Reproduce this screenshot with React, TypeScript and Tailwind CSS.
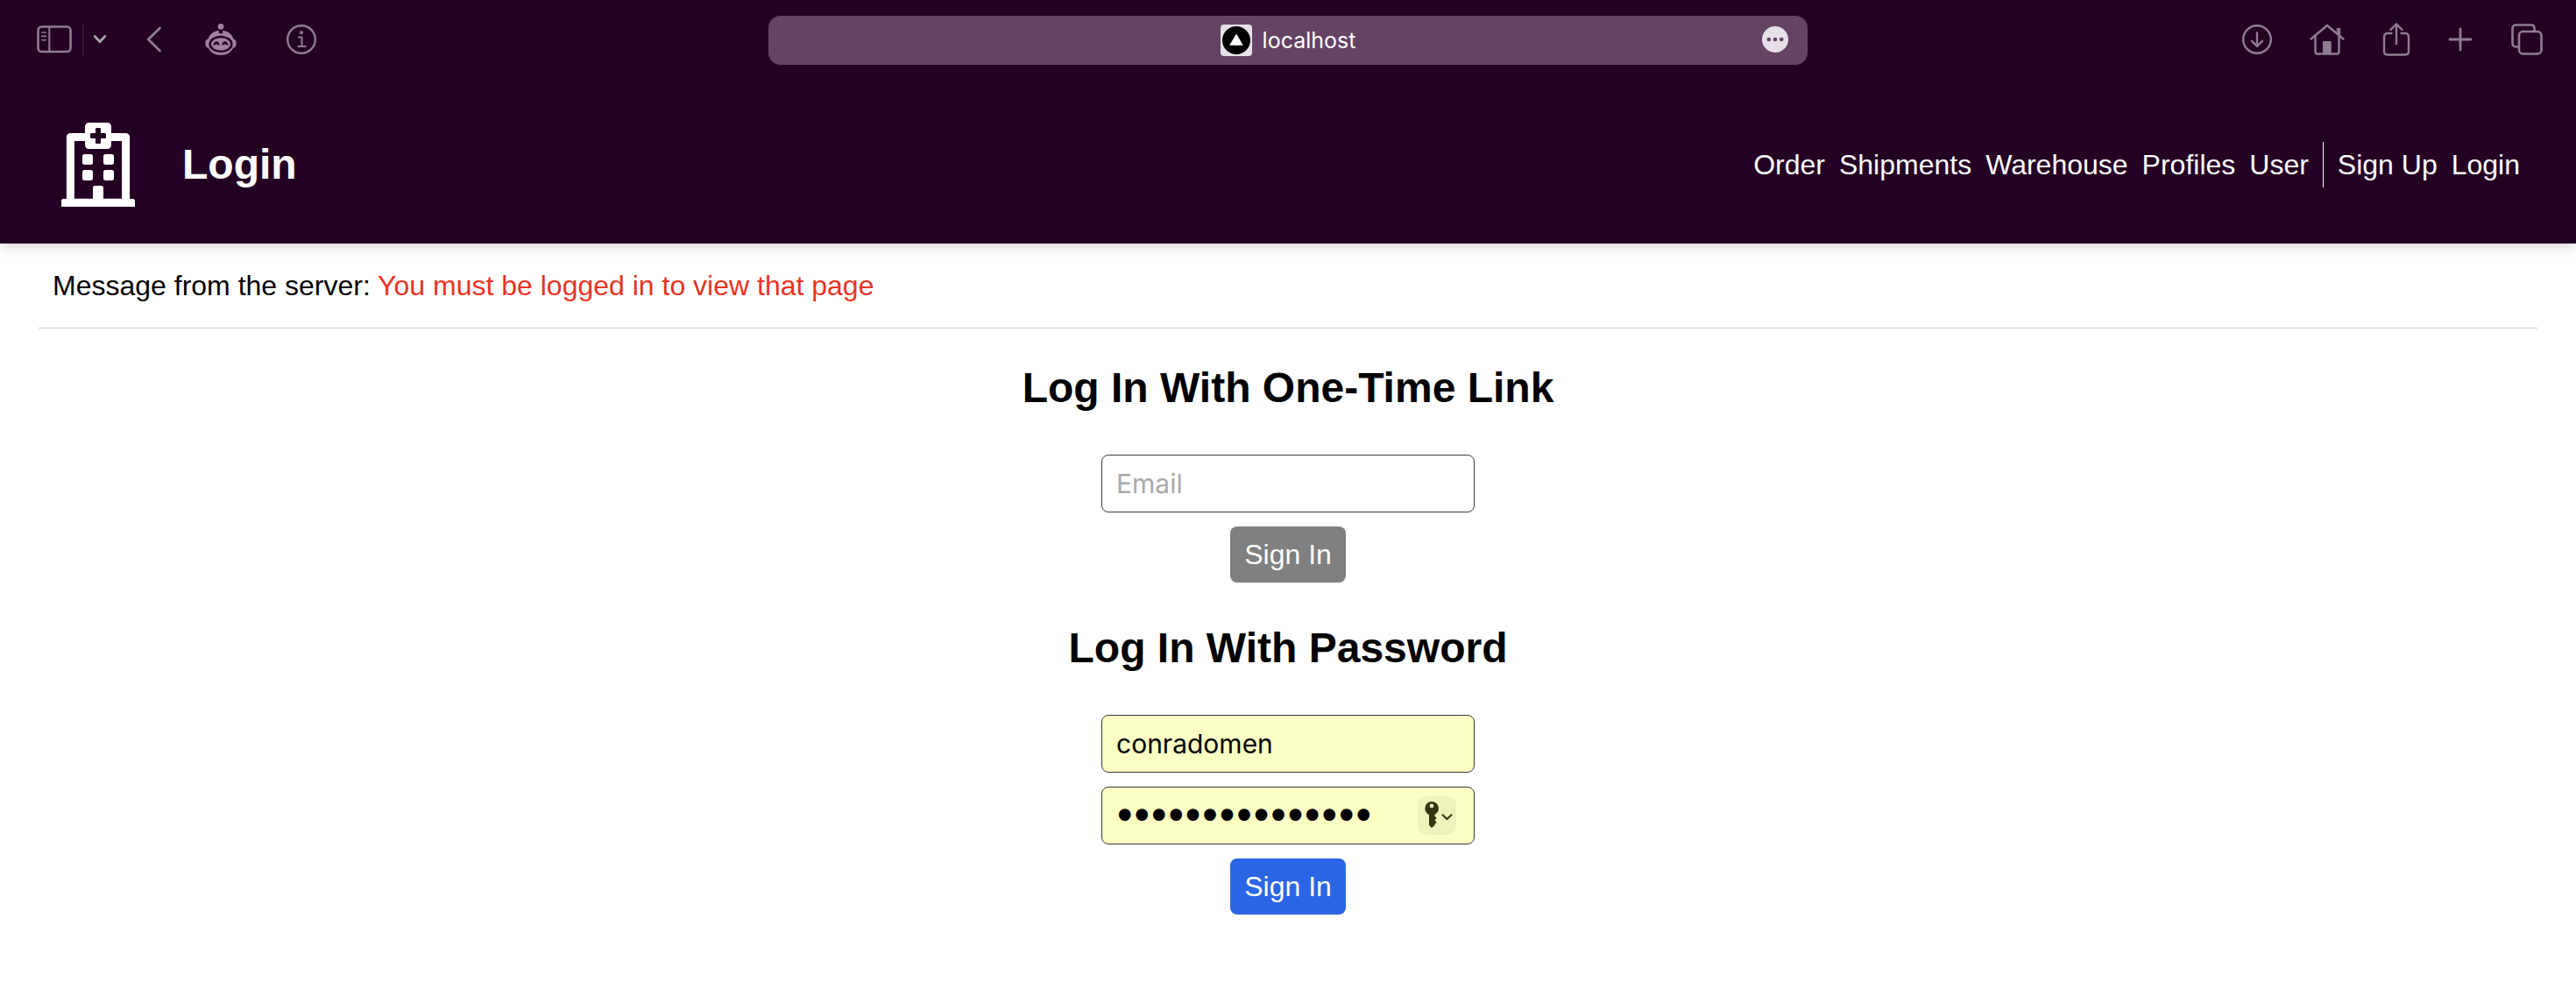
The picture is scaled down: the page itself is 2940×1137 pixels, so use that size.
import type { ReactNode } from "react";
import { FaRegHospital } from "react-icons/fa";

const SANS = "font-['Liberation_Sans',Arial,sans-serif]";

function ToolButton({ label, children }: { label: string; children: ReactNode }) {
  return (
    <button type="button" aria-label={label} className="shrink-0">
      {children}
    </button>
  );
}

function SidebarIcon() {
  return (
    <svg width="40" height="32" viewBox="0 0 40 32" fill="none" stroke="#907c91" strokeWidth="2.6" strokeLinecap="round">
      <rect x="1.5" y="1.5" width="37" height="28.5" rx="4" />
      <path d="M14.3 2v28" strokeWidth="2" />
      <path d="M5.8 8h4.4M5.8 12.4h4.4M5.8 16.8h4.4" strokeWidth="1.6" />
    </svg>
  );
}

function ChevronIcon() {
  return (
    <svg width="16" height="12" viewBox="0 0 16 12" fill="none" stroke="#a9a4a9" strokeWidth="2.8" strokeLinecap="round" strokeLinejoin="round">
      <path d="M2.2 2.4 8 8.8l5.8-6.4" />
    </svg>
  );
}

function BackIcon() {
  return (
    <svg width="18" height="32" viewBox="0 0 18 32" fill="none" stroke="#907c91" strokeWidth="2.8" strokeLinecap="round" strokeLinejoin="round">
      <path d="M15.5 3 2.2 16l13.3 13" />
    </svg>
  );
}

function RobotIcon() {
  return (
    <svg width="36" height="38" viewBox="0 0 36 38" fill="#a380a5">
      <circle cx="18" cy="4.3" r="3.4" />
      <path d="M15.8 9C9.500 9.600 5.200 13.200 3.600 18.500 1.500 18.800.4 20 .4 23.500s1.100 4.800 3.200 5C6 33.500 11.500 37 18 37s12-3.500 14.400-8.500c2.100-.2 3.200-1.500 3.200-5s-1.100-4.700-3.200-5C30.800 13.200 26.500 9.600 20.200 9v3.200h-4.400z" />
      <ellipse cx="18" cy="24.400" rx="13.600" ry="9.600" fill="#240023" />
      <ellipse cx="18" cy="24.400" rx="11" ry="7.200" />
      <path d="M9.600 26c-.3-6.500 7.300-6.500 7 0-1.200-.2-1.400-1.500-3.500-1.500S10.800 25.800 9.600 26zM19.400 26c-.3-6.500 7.300-6.500 7 0-1.200-.2-1.400-1.500-3.500-1.500s-2.300 1.300-3.500 1.500z" fill="#240023" />
    </svg>
  );
}

function InfoIcon() {
  return (
    <svg width="36" height="36" viewBox="0 0 36 36" fill="none" stroke="#907c91" strokeWidth="2.4" strokeLinecap="round" strokeLinejoin="round">
      <circle cx="18" cy="18" r="15.8" />
      <path d="M14.8 15.6h3.7v10.2M14.3 25.9h8.400" strokeWidth="2" />
      <circle cx="18" cy="10.3" r="2" fill="#907c91" stroke="none" />
    </svg>
  );
}

function DownloadIcon() {
  return (
    <svg width="36" height="36" viewBox="0 0 36 36" fill="none" stroke="#907c91" strokeWidth="2.4" strokeLinecap="round" strokeLinejoin="round">
      <circle cx="18" cy="18" r="15.8" />
      <path d="M18 10.500v15M12 19.800l6 6 6-6" />
    </svg>
  );
}

function HomeIcon() {
  return (
    <svg width="40" height="38" viewBox="0 0 40 38" fill="none" stroke="#907c91" strokeWidth="2.4" strokeLinecap="round" strokeLinejoin="round">
      <path d="M1.600 18.500 20 3l18.400 15.500" />
      <path d="M6.500 16v17c0 1.500 1 2.500 2.500 2.500h22c1.500 0 2.500-1 2.500-2.500V16" />
      <path d="M15.800 21.500h8.400v14h-8.400zM31.500 6.500h3.200v8l-3.200-2.600z" fill="#907c91" strokeWidth="1" />
    </svg>
  );
}

function ShareIcon() {
  return (
    <svg width="32" height="40" viewBox="0 0 32 40" fill="none" stroke="#907c91" strokeWidth="2.4" strokeLinecap="round" strokeLinejoin="round">
      <path d="M10.500 13H6c-2.500 0-4 1.500-4 4v16.500c0 2.500 1.500 4 4 4h20c2.500 0 4-1.500 4-4V17c0-2.500-1.500-4-4-4h-4.500" />
      <path d="M16 25V2.500M9.500 8.800 16 2.300l6.500 6.500" />
    </svg>
  );
}

function PlusIcon() {
  return (
    <svg width="28" height="28" viewBox="0 0 28 28" fill="none" stroke="#907c91" strokeWidth="2.8" strokeLinecap="round">
      <path d="M14 2v24M2 14h24" />
    </svg>
  );
}

function TabsIcon() {
  return (
    <svg width="36" height="36" viewBox="0 0 36 36" fill="none" stroke="#907c91" strokeWidth="2.6" strokeLinejoin="round">
      <rect x="9" y="9" width="25.5" height="25.5" rx="4.500" />
      <path d="M9 26.500H5.500c-2.500 0-4-1.500-4-4v-17c0-2.500 1.500-4 4-4h17c2.500 0 4 1.500 4 4V9" />
    </svg>
  );
}

function BrowserBar() {
  return (
    <div className="grid h-[92px] grid-cols-[1fr_1186px_1fr] items-center">
      <div className="flex items-center pb-0.5 pl-[42px]">
        <ToolButton label="Show sidebar"><SidebarIcon /></ToolButton>
        <div className="ml-3 h-9 w-0.5 bg-[#34143a]" />
        <div className="ml-2.5 flex"><ToolButton label="Sidebar options"><ChevronIcon /></ToolButton></div>
        <div className="ml-[45px] flex"><ToolButton label="Back"><BackIcon /></ToolButton></div>
        <div className="ml-[49px] flex"><ToolButton label="Assistant"><RobotIcon /></ToolButton></div>
        <div className="ml-14 flex"><ToolButton label="Page info"><InfoIcon /></ToolButton></div>
      </div>
      <div className="relative flex h-14 items-center justify-center rounded-[14px] bg-[#644365]">
        <svg width="36" height="36" viewBox="0 0 36 36">
          <rect width="36" height="36" rx="4" fill="#e7e0e8" />
          <circle cx="18" cy="18" r="16" fill="#000" />
          <path d="M18 10.500 25.800 23.800H10.200z" fill="#fff" />
        </svg>
        <span className="ml-3 font-['Inter',sans-serif] text-[25px] leading-8 text-white">localhost</span>
        <button type="button" aria-label="Page menu" className="absolute right-[21px] flex">
          <svg width="32" height="32" viewBox="0 0 32 32">
            <circle cx="16" cy="15" r="15" fill="#e7e0e8" />
            <circle cx="8.800" cy="15" r="2.300" fill="#644365" />
            <circle cx="16" cy="15" r="2.300" fill="#644365" />
            <circle cx="23.200" cy="15" r="2.300" fill="#644365" />
          </svg>
        </button>
      </div>
      <div className="flex items-center justify-end pr-[38px] pb-0.5">
        <ToolButton label="Downloads"><DownloadIcon /></ToolButton>
        <div className="ml-[42px] flex"><ToolButton label="Home"><HomeIcon /></ToolButton></div>
        <div className="ml-[43px] flex"><ToolButton label="Share"><ShareIcon /></ToolButton></div>
        <div className="ml-[43px] flex"><ToolButton label="New tab"><PlusIcon /></ToolButton></div>
        <div className="ml-[44px] flex"><ToolButton label="Tab overview"><TabsIcon /></ToolButton></div>
      </div>
    </div>
  );
}

function SiteHeader() {
  return (
    <div className="flex items-center justify-between pt-12 pr-16 pb-[42px] pl-[70px] text-white">
      <div className="flex items-center">
        <FaRegHospital className="h-24 w-[84px]" />
        <h1 className="ml-[54px] text-5xl font-bold">Login</h1>
      </div>
      <nav className="flex items-center gap-4 text-[32px] leading-[52px]">
        <a href="#order">Order</a>
        <a href="#shipments">Shipments</a>
        <a href="#warehouse">Warehouse</a>
        <a href="#profiles">Profiles</a>
        <a href="#user">User</a>
        <div className="flex gap-4 border-l border-white pl-4">
          <a href="#signup">Sign Up</a>
          <a href="#login">Login</a>
        </div>
      </nav>
    </div>
  );
}

function KeyMenu() {
  return (
    <button type="button" aria-label="Saved passwords" className="absolute top-[11px] right-[21px] flex size-11 items-center justify-center rounded-[10px] bg-[#eff2b9]">
      <svg width="44" height="44" viewBox="0 0 44 44">
        <path fillRule="evenodd" d="M16 6a7.800 7.800 0 0 1 3.400 14.900v1.700l2.300 2.300-2.200 2.400 2.200 2.400-2.200 2.300v1.200L16 36l-3-3V20.900A7.800 7.800 0 0 1 16 6zm0 2.600a2.300 2.300 0 1 0 0 4.600 2.300 2.300 0 0 0 0-4.600z" fill="#35350f" />
        <path d="m28.500 21.300 5 4.700 5-4.700" fill="none" stroke="#35350f" strokeWidth="2.200" strokeLinecap="round" strokeLinejoin="round" />
      </svg>
    </button>
  );
}

const FIELD = "block h-[66px] w-full rounded-lg border border-[#3a3a3a] px-4 font-['Inter',sans-serif] text-[30px] text-black placeholder:text-[#a9a9a9]";
const SUBMIT = "h-16 rounded-lg px-4 text-[32px] text-white";

export default function App() {
  return (
    <div className={`min-h-screen bg-white text-black ${SANS}`}>
      <header className="bg-[#240023] shadow-[0_0_16px_rgba(0,0,0,0.25)]">
        <BrowserBar />
        <SiteHeader />
      </header>
      <main className="px-11">
        <p className="border-b border-[#cccccc] px-4 pt-7 pb-7 text-[32px] leading-10">
          Message from the server: <span className="text-[#e93323]">You must be logged in to view that page</span>
        </p>
        <form className="flex flex-col items-center" onSubmit={(e) => e.preventDefault()}>
          <h2 className="mt-10 mb-12 text-5xl leading-14 font-bold">Log In With One-Time Link</h2>
          <div className="flex w-[426px] flex-col items-center gap-4">
            <input type="email" aria-label="Email" placeholder="Email" className={`bg-white ${FIELD}`} />
            <button type="submit" className={`bg-[#808080] ${SUBMIT}`}>Sign In</button>
          </div>
        </form>
        <form className="flex flex-col items-center" onSubmit={(e) => e.preventDefault()}>
          <h2 className="mt-[47px] mb-12 text-5xl leading-14 font-bold">Log In With Password</h2>
          <div className="flex w-[426px] flex-col items-center gap-4">
            <input type="text" aria-label="Username" defaultValue="conradomen" className={`bg-[#fbffc4] ${FIELD}`} />
            <div className="relative w-full">
              <input
                type="password"
                aria-label="Password"
                defaultValue="aaaaaaaaaaaaaaa"
                className="block h-[66px] w-full rounded-lg border border-[#3a3a3a] bg-[#fbffc4] pr-20 pl-4 font-['DejaVu_Sans',sans-serif] text-[33px] text-black [-webkit-text-stroke:4px_black]"
              />
              <KeyMenu />
            </div>
            <button type="submit" className={`bg-[#2b66e6] ${SUBMIT}`}>Sign In</button>
          </div>
        </form>
      </main>
    </div>
  );
}
